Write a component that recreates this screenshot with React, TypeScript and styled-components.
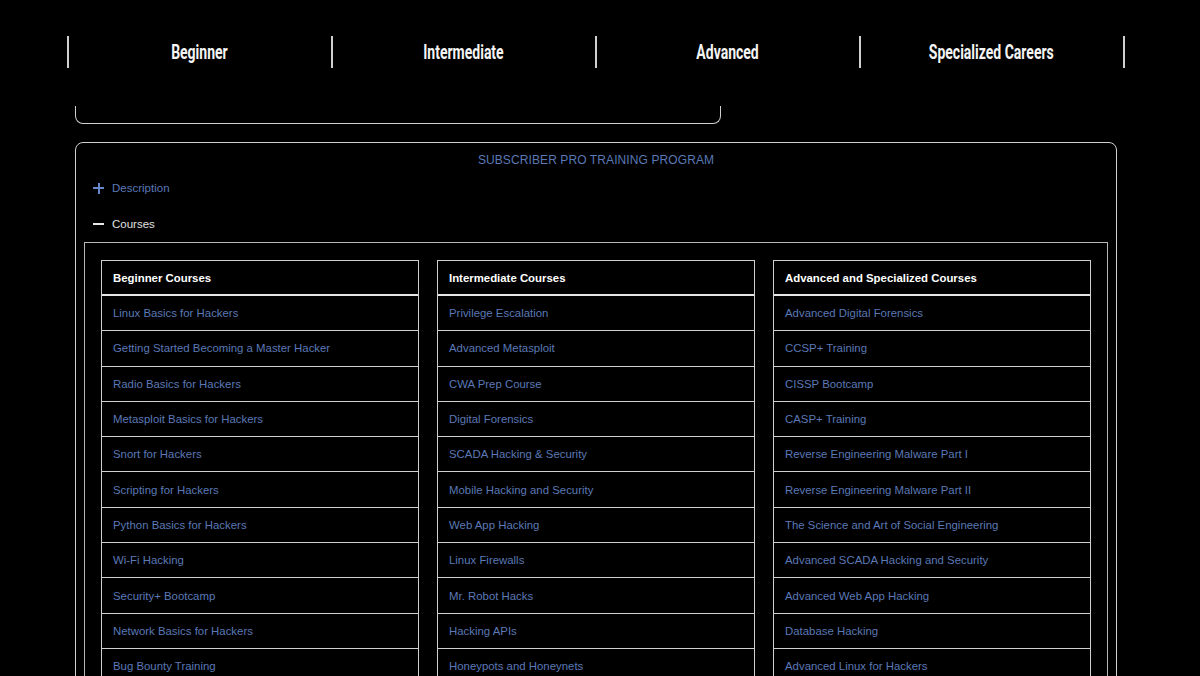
import React from "react";
import styled, { createGlobalStyle } from "styled-components";

const Global = createGlobalStyle`
  html, body { margin: 0; padding: 0; background: #000; overflow: hidden; }
  body { font-family: "Liberation Sans", Arial, sans-serif; color: #fff; }
  * { box-sizing: border-box; }
`;

const Page = styled.div`
  width: 1191px;
  display: flex;
  flex-direction: column;
  align-items: center;
  padding-top: 36px;
`;

const Nav = styled.nav`
  width: 1058px;
  display: grid;
  grid-template-columns: repeat(4, 1fr);
  border-right: 2px solid #d0d0d0;
`;

const NavItem = styled.a`
  height: 32px;
  display: flex;
  align-items: center;
  justify-content: center;
  border-left: 2px solid #d0d0d0;
  color: #f4f4f4;
  text-decoration: none;
`;

const NavLabel = styled.span`
  display: inline-block;
  font-family: Roboto, "Liberation Sans", sans-serif;
  font-weight: 700;
  font-size: 20px;
  transform: scaleX(0.7);
  white-space: nowrap;
`;

const Column = styled.div`
  width: 1041px;
  display: flex;
  flex-direction: column;
  align-items: flex-start;
`;

const TopBox = styled.div`
  width: 646px;
  height: 18px;
  margin-top: 38px;
  border: 1px solid #d0d0d0;
  border-top: none;
  border-radius: 0 0 8px 8px;
`;

const Panel = styled.section`
  width: 1042px;
  margin-top: 18px;
  border: 1px solid #d0d0d0;
  border-radius: 8px;
  padding: 10px 8px 0;
`;

const Title = styled.div`
  text-align: center;
  color: #5b79b6;
  font-size: 12px;
  line-height: 15px;
  margin: 0 0 2px;
  letter-spacing: 0.1px;
`;

const Toggle = styled.div<{ $open?: boolean }>`
  display: flex;
  align-items: center;
  gap: 8px;
  height: 36px;
  padding-left: 9px;
  font-size: 11.5px;
  color: ${(p) => (p.$open ? "#e0e0e0" : "#5b79b6")};
`;

const ToggleIcon = styled.span<{ $open?: boolean }>`
  width: 11px;
  height: 11px;
  position: relative;
  display: inline-block;
  &::before, &::after {
    content: "";
    position: absolute;
    background: ${(p) => (p.$open ? "#e8e8e8" : "#6789cc")};
  }
  &::before { left: 0; right: 0; top: 4.5px; height: 2px; }
  &::after {
    display: ${(p) => (p.$open ? "none" : "block")};
    top: 0; bottom: 0; left: 4.5px; width: 2px;
  }
`;

const Inner = styled.div`
  border: 1px solid #b8b8b8;
  border-bottom: none;
  padding: 17px 16px 0;
  display: grid;
  grid-template-columns: repeat(3, 318px);
  justify-content: space-between;
`;

const Table = styled.div`
  border: 1px solid #d0d0d0;
  border-bottom: none;
`;

const HeadCell = styled.div`
  height: 35px;
  display: flex;
  align-items: center;
  padding: 0 11px;
  border-bottom: 2px solid #e6e6e6;
  font-weight: 700;
  font-size: 11.4px;
  color: #fff;
`;

const Row = styled.a`
  height: 35.3px;
  display: flex;
  align-items: center;
  padding: 0 11px;
  border-bottom: 1px solid #d0d0d0;
  font-size: 11.4px;
  color: #5b79b6;
  text-decoration: none;
`;

const columns: { title: string; items: string[] }[] = [
  {
    title: "Beginner Courses",
    items: [
      "Linux Basics for Hackers",
      "Getting Started Becoming a Master Hacker",
      "Radio Basics for Hackers",
      "Metasploit Basics for Hackers",
      "Snort for Hackers",
      "Scripting for Hackers",
      "Python Basics for Hackers",
      "Wi-Fi Hacking",
      "Security+ Bootcamp",
      "Network Basics for Hackers",
      "Bug Bounty Training",
    ],
  },
  {
    title: "Intermediate Courses",
    items: [
      "Privilege Escalation",
      "Advanced Metasploit",
      "CWA Prep Course",
      "Digital Forensics",
      "SCADA Hacking & Security",
      "Mobile Hacking and Security",
      "Web App Hacking",
      "Linux Firewalls",
      "Mr. Robot Hacks",
      "Hacking APIs",
      "Honeypots and Honeynets",
    ],
  },
  {
    title: "Advanced and Specialized Courses",
    items: [
      "Advanced Digital Forensics",
      "CCSP+ Training",
      "CISSP Bootcamp",
      "CASP+ Training",
      "Reverse Engineering Malware Part I",
      "Reverse Engineering Malware Part II",
      "The Science and Art of Social Engineering",
      "Advanced SCADA Hacking and Security",
      "Advanced Web App Hacking",
      "Database Hacking",
      "Advanced Linux for Hackers",
    ],
  },
];

export default function App() {
  return (
    <>
      <Global />
      <Page>
        <Nav>
          {["Beginner", "Intermediate", "Advanced", "Specialized Careers"].map((n) => (
            <NavItem key={n} href="#">
              <NavLabel>{n}</NavLabel>
            </NavItem>
          ))}
        </Nav>
        <Column>
          <TopBox />
          <Panel>
            <Title>SUBSCRIBER PRO TRAINING PROGRAM</Title>
            <Toggle>
              <ToggleIcon />
              <span>Description</span>
            </Toggle>
            <Toggle $open>
              <ToggleIcon $open />
              <span>Courses</span>
            </Toggle>
            <Inner>
              {columns.map((c) => (
                <Table key={c.title}>
                  <HeadCell>{c.title}</HeadCell>
                  {c.items.map((i) => (
                    <Row key={i} href="#">{i}</Row>
                  ))}
                </Table>
              ))}
            </Inner>
          </Panel>
        </Column>
      </Page>
    </>
  );
}
